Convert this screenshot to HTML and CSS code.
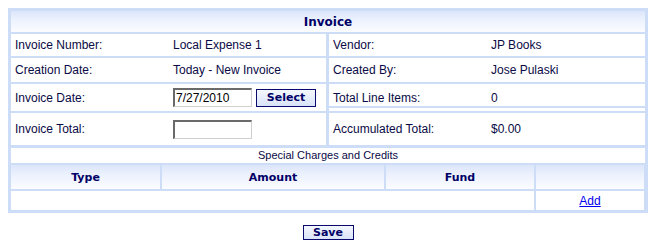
FILE: index.html
```html
<!DOCTYPE html>
<html lang="en">
<head>
    <meta charset="UTF-8">
    <title>Invoice</title>
    <link rel="stylesheet" href="styles.css">
</head>
<body>

<div class="invoice">
    <div class="title">Invoice</div>

    <div class="info">
        <div class="cell"><span class="label">Invoice Number:</span><span>Local Expense 1</span></div>
        <div class="cell"><span class="label">Vendor:</span><span>JP Books</span></div>

        <div class="cell"><span class="label">Creation Date:</span><span>Today - New Invoice</span></div>
        <div class="cell"><span class="label">Created By:</span><span>Jose Pulaski</span></div>

        <div class="cell">
            <span class="label">Invoice Date:</span>
            <input class="field" type="text" value="7/27/2010">
            <button class="btn select">Select</button>
        </div>
        <div class="cell split"><span class="label">Total Line Items:</span><span>0</span></div>

        <div class="cell"><span class="label">Invoice Total:</span><input class="field" type="text"></div>
        <div class="cell"><span class="label">Accumulated Total:</span><span>$0.00</span></div>
    </div>

    <div class="special">Special Charges and Credits</div>

    <div class="charges">
        <div class="head">Type</div>
        <div class="head">Amount</div>
        <div class="head">Fund</div>
        <div class="head"></div>
        <div class="body wide"></div>
        <div class="body add"><a href="#">Add</a></div>
    </div>
</div>

<div class="actions">
    <button class="btn save">Save</button>
</div>

</body>
</html>
```

FILE: styles.css
```css
body {
    margin: 8px;
    background-color: #fff;
    font-family: "Liberation Sans", Arial, sans-serif;
    font-size: 12px;
    color: #0a0a46;
}
.invoice {
    width: 634px;
    padding: 3px;
    background-color: #cddcf7;
    display: flex;
    flex-direction: column;
    gap: 2px;
}
.title, .head {
    background: linear-gradient(#dce6fa, #edf2fd 45%, #fbfcff);
    font-family: "DejaVu Sans", Verdana, sans-serif;
    font-weight: bold;
    color: #000066;
    display: flex;
    align-items: center;
    justify-content: center;
}
.title {
    height: 21px;
    font-size: 12px;
}
.info {
    display: grid;
    grid-template-columns: 315px 316px;
    grid-template-rows: 22px 24px 27px 32px;
    column-gap: 3px;
    row-gap: 2px;
}
.cell {
    background-color: #fff;
    display: flex;
    align-items: center;
    padding-left: 4px;
}
.cell.split {
    box-shadow: inset 0 -3px 0 #fff, inset 0 -5px 0 #cddcf7;
}
.label {
    width: 158px;
    flex-shrink: 0;
}
.field {
    width: 75px;
    height: 16px;
    padding: 0 0 0 1px;
    margin: 0;
    border-style: solid;
    border-width: 2px 1px 1px 2px;
    border-color: #6a6a6a #cfcfcf #cfcfcf #6a6a6a;
    font-family: "Liberation Sans", Arial, sans-serif;
    font-size: 12px;
    color: #000;
    box-sizing: content-box;
}
.btn {
    border: 1px solid #0a0a6e;
    background: linear-gradient(#f4f7fe, #d9e3f8);
    font-family: "DejaVu Sans", Verdana, sans-serif;
    font-weight: bold;
    font-size: 11px;
    color: #000066;
    padding: 0;
    margin: 0;
}
.select {
    width: 60px;
    height: 18px;
    margin-left: 4px;
}
.special {
    background-color: #fff;
    height: 15px;
    margin-top: 1px;
    font-size: 11px;
    text-align: center;
    line-height: 15px;
}
.charges {
    display: grid;
    grid-template-columns: 149px 222px 148px 108px;
    grid-template-rows: 24px 19px;
    gap: 2px;
}
.head {
    font-size: 11px;
}
.body {
    background-color: #fff;
}
.wide {
    grid-column: span 3;
}
.add {
    display: flex;
    align-items: center;
    justify-content: center;
}
.add a {
    color: #0000ee;
}
.actions {
    width: 640px;
    margin-top: 12px;
    display: flex;
    justify-content: center;
}
.save {
    width: 51px;
    height: 15px;
    line-height: 13px;
}
```
